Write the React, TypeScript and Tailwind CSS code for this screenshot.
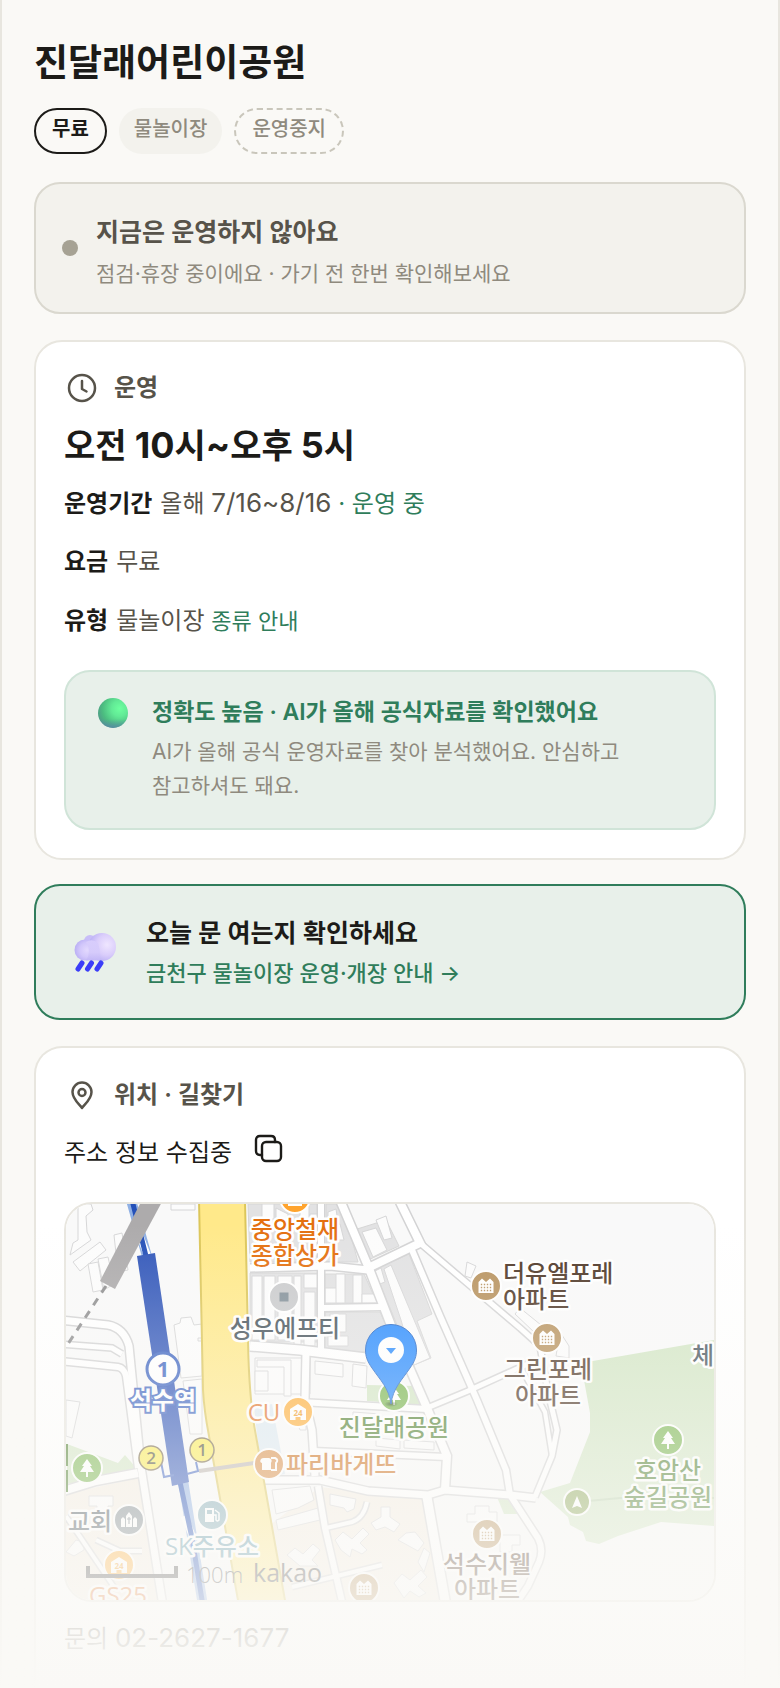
import type { ReactNode } from "react";

type Point = [number, number];

const roads: { d: string; w: number }[] = [
  { d: "M60 1320L108 1325Q124 1328 129 1346L141 1467L163 1606", w: 7 },
  { d: "M60 1344L112 1348L122 1354", w: 5 },
  { d: "M60 1361L118 1367Q124 1368 126 1376L138 1468", w: 6 },
  { d: "M60 1492L96 1481L138 1473", w: 8 },
  { d: "M66 1516L116 1590", w: 4 },
  { d: "M96 1540L120 1551L142 1551", w: 4 },
  { d: "M250 1268L330 1266L368 1270", w: 7 },
  { d: "M321 1200L321 1350", w: 6 },
  { d: "M322 1308L382 1307", w: 6 },
  { d: "M250 1346L300 1350L366 1358", w: 9 },
  { d: "M306 1352L305 1400L312 1430L315 1476", w: 7 },
  { d: "M300 1402L427 1409", w: 6 },
  { d: "M314 1451L446 1457", w: 6 },
  { d: "M264 1480L320 1480L368 1491L428 1495L445 1490L510 1495L536 1498", w: 7 },
  { d: "M340 1200L368 1266L392 1328L427 1408L447 1456L445 1490", w: 8 },
  { d: "M399 1200L420 1243L368 1268", w: 8 },
  { d: "M420 1243L467 1283L520 1328L540 1346L548 1392L557 1430L552 1456L535 1497", w: 5 },
  { d: "M520 1366L545 1412L552 1456", w: 4 },
  { d: "M412 1250L440 1316L477 1400L506 1470L510 1495L538 1538Q544 1550 539 1562L528 1586L516 1604", w: 6 },
  { d: "M427 1408L468 1391L532 1362", w: 5 },
  { d: "M318 1486L325 1528L343 1606", w: 6 },
  { d: "M427 1497L446 1606", w: 9 },
  { d: "M326 1528L352 1522Q364 1518 367 1502", w: 4 },
  { d: "M292 1587L382 1565", w: 4 },
];

const blocks: string[] = [
  "M248 1204H318V1262H250Z",
  "M326 1204H338L352 1240L358 1262H326Z",
  "M250 1273H317V1342H250Z",
  "M325 1274H364L377 1303H325Z",
  "M325 1312H380L392 1338L366 1352H325Z",
  "M354 1230L386 1220L399 1246L366 1261Z",
  "M374 1270L409 1254L432 1314L417 1321L431 1358L414 1365Z",
];

const buildings: string[] = [
  "M78 1204H91L93 1210L86 1216L87 1232L91 1240L70 1255L73 1243L78 1240Z",
  "M73 1262L100 1242L106 1250L80 1271Z",
  "M88 1264L98 1262L103 1290L93 1292Z",
  "M98 1259L108 1257L114 1284L104 1290Z",
  "M114 1235L122 1233L128 1270L118 1272Z",
  "M171 1204H195V1210H171Z",
  "M174 1325L180 1323L181 1318L191 1317L194 1325L202 1324V1338L198 1338V1341H202V1376L181 1378Z",
  "M183 1381L202 1379V1434H190Z",
  "M66 1400L80 1402L72 1438L66 1436Z",
  "M262 1204H274V1219H262Z",
  "M276 1208L288 1214V1240H276Z",
  "M300 1206H309V1240H300Z",
  "M310 1214H318V1256H310Z",
  "M328 1212L336 1209L338 1222H328Z",
  "M328 1226L340 1224L344 1240H328Z",
  "M252 1276H262V1340H252Z",
  "M264 1276H275V1340H264Z",
  "M278 1276H292V1340H278Z",
  "M294 1276H301V1346H294Z",
  "M304 1274H319V1288H304Z",
  "M304 1292H315V1346H304Z",
  "M325 1288H338V1303H325Z",
  "M336 1274H345V1303H336Z",
  "M353 1275H362V1303H353Z",
  "M362 1294H378V1303H362Z",
  "M330 1314H346V1332H330Z",
  "M328 1336H348V1346H328Z",
  "M362 1232L376 1228L387 1250L373 1257Z",
  "M376 1220L386 1216L392 1238L384 1240Z",
  "M373 1272L381 1268L385 1282L377 1285Z",
  "M384 1269L391 1265L430 1358L414 1365L401 1320Z",
  "M255 1358H310V1394H255Z",
  "M257 1360H291V1396H284V1367H257Z",
  "M255 1371H268V1391H255Z",
  "M315 1361L343 1364V1377L315 1374Z",
  "M353 1364L367 1366L366 1388L352 1386Z",
  "M353 1412L380 1414V1425L353 1422Z",
  "M376 1438L400 1440V1449L376 1446Z",
  "M404 1440L434 1442V1450L404 1448Z",
  "M296 1420H306V1430H300Z",
  "M272 1490L310 1486L314 1500L298 1508L276 1514Z",
  "M276 1520L318 1508L320 1520L278 1530Z",
  "M330 1494L356 1499L354 1509L347 1512L344 1508L330 1505Z",
  "M381 1507H390V1517L400 1524L394 1532L385 1527L376 1530L371 1523L381 1517Z",
  "M335 1540L343 1532L352 1539L363 1528L369 1534L360 1543L367 1550L362 1554L352 1549L350 1557L341 1550Z",
  "M406 1533L415 1532L424 1543L418 1551L398 1540Z",
  "M424 1548L430 1553L424 1572L418 1562Z",
  "M287 1555L295 1548L303 1554L313 1544L320 1550L312 1560L318 1566L306 1566L300 1566Z",
  "M394 1583L402 1574L410 1580L421 1570L427 1577L418 1586L426 1593L419 1597L410 1591L404 1598Z",
  "M467 1514H475V1506H489V1512H497V1522H467Z",
  "M500 1535H520V1545H512V1552H500Z",
  "M560 1332L569 1346V1358L556 1356Z",
  "M467 1262L476 1266L471 1278L465 1276Z",
  "M515 1314L520 1308L541 1325L535 1333Z",
  "M89 1496H113V1506H108V1518H97V1506H89Z",
  "M76 1540L84 1542V1550L74 1556L66 1552Z",
];

function polygon(points: Point[]) {
  return points.map((p) => p.join(",")).join(" ");
}

const forest = polygon([
  [587, 1362], [714, 1340], [714, 1526], [661, 1522], [618, 1536], [599, 1544], [586, 1541],
  [583, 1532], [570, 1525], [568, 1517], [540, 1492], [570, 1483], [590, 1432], [590, 1413], [584, 1380],
]);

function Label({ x, y, color, anchor = "middle", children }: { x: number; y: number; color: string; anchor?: "start" | "middle"; children: ReactNode }) {
  return (
    <text x={x} y={y} fill={color} textAnchor={anchor} stroke="#fff" strokeWidth={5} strokeLinejoin="round" paintOrder="stroke" fontSize={24} fontWeight={500}>
      {children}
    </text>
  );
}

function Marker({ x, y, color, r = 14, children }: { x: number; y: number; color: string; r?: number; children?: ReactNode }) {
  return (
    <g transform={`translate(${x} ${y})`}>
      <circle r={r + 1} fill={color} stroke="#fff" strokeWidth={2} />
      {children}
    </g>
  );
}

function Apartment() {
  return (
    <g>
      <path d="M-7.500 7V-4L-4-7.500L0-4L4-7.500L7.500-4V7Z" fill="#fff" />
      {[-1.5, 1.5, 4.5].map((y) => (
        <path key={y} d={`M-5.200 ${y}H6`} stroke="#b8935f" strokeWidth={1.4} strokeDasharray="1.4 1.6" />
      ))}
    </g>
  );
}

function Tree() {
  return <path d="M0-9L5-2H3L7 4H1V9H-1V4H-7L-3-2H-5Z" fill="#fff" />;
}

function Store() {
  return (
    <g>
      <path d="M0-8L8-3V8H2.500V5H-2.500V8H-8V-3Z" fill="#fff" />
      <text y={3.5} fontSize={8} fontWeight={700} textAnchor="middle" fill="#f09a1c">24</text>
    </g>
  );
}

function ParkMap() {
  return (
    <svg viewBox="66 1204 648 396" preserveAspectRatio="xMidYMid slice" className="block h-[396px] w-full font-['Open_Sans','Noto_Sans_CJK_KR',sans-serif]" role="img" aria-label="진달래어린이공원 주변 지도">
      <rect x="-400" y="1204" width="1600" height="396" fill="#f9f9f9" />
      <path d="M66 1494L138 1478L160 1600H66Z" fill="#f5eee3" />
      <path d="M320 1487L422 1499L440 1600H285L270 1525Z" fill="#f5eee3" />
      <polygon points={forest} fill="#d3e6c5" />
      <path d="M588 1501L620 1498L714 1498" fill="none" stroke="#bcd3b0" strokeWidth="2" />
      <path d="M367 1385L416 1386L421 1405L367 1401Z" fill="#d3e6c5" />
      <path d="M67 1444L118 1463L125 1455L138 1470L100 1479L67 1484Z" fill="#d3e6c5" />
      <path d="M497 1497L504 1514L518 1514L510 1497Z" fill="#d3e6c5" />
      <path d="M254 1408L272 1404L285 1474L262 1478Z" fill="#dce9f2" />

      {blocks.map((d) => <path key={d} d={d} fill="#e2e2e3" stroke="#d6d6d6" strokeWidth={1} />)}
      {buildings.map((d) => <path key={d} d={d} fill="#fcfcfc" stroke="#d6d6d7" strokeWidth={1} />)}
      {roads.map(({ d, w }) => <path key={d} d={d} fill="none" stroke="#d3d3d4" strokeWidth={w + 3} />)}
      {roads.map(({ d, w }) => <path key={d} d={d} fill="none" stroke="#fff" strokeWidth={w} />)}

      <path d="M199 1200L203 1390Q204 1410 209 1436L239 1606H286L256 1436Q249 1400 248 1340L245 1200Z" fill="#ffe98a" />
      <path d="M199 1200L203 1390Q204 1410 209 1436L239 1606M286 1606L256 1436Q249 1400 248 1340L245 1200" fill="none" stroke="#dcc65a" strokeWidth="2" />

      <path d="M199 1471L268 1461" stroke="#bdb5b0" strokeWidth="4" />
      <path d="M131 1200L148 1260M183 1480L203 1606" stroke="#8fb0e4" strokeWidth="10" fill="none" />
      <path d="M140 1236L150 1262M184 1516L194 1540" stroke="#fff" strokeWidth="7" fill="none" />
      <path d="M132 1200L147 1260M180 1482L192 1538L203 1606" stroke="#2450b8" strokeWidth="5" fill="none" />
      <path d="M137 1256L155 1253L189 1482L172 1486Z" fill="#3358ba" />
      <path d="M161 1462L164 1477L174 1475M196 1462L198 1471L187 1474" fill="none" stroke="#4468c4" strokeWidth="2" />
      <path d="M106 1286L64 1350" stroke="#8f8f90" strokeWidth="3" strokeDasharray="8 7" />
      <path d="M142 1200H163L115 1289L100 1281Z" fill="#adabac" />

      <circle cx="163" cy="1369" r="16" fill="#fff" stroke="#3f66c2" strokeWidth="3" />
      <text x="163" y="1377" fontSize="22" fontWeight="700" textAnchor="middle" fill="#3f66c2">1</text>
      <text x="163" y="1409" fontSize="24" fontWeight="700" textAnchor="middle" fill="#fff" stroke="#3f66c2" strokeWidth="4" paintOrder="stroke">석수역</text>

      {([[151, 1458, "2"], [202, 1450, "1"]] as [number, number, string][]).map(([x, y, n]) => (
        <g key={n}>
          <circle cx={x} cy={y} r="12" fill="#fbec52" stroke="#756548" strokeWidth="1.5" />
          <text x={x} y={y + 6} fontSize="17" fontWeight="600" textAnchor="middle" fill="#4c4a35">{n}</text>
        </g>
      ))}

      <Marker x={295} y={1198} color="#ffa42e"><path d="M-7 4H7V8H-7Z" fill="#fff" /></Marker>
      <Marker x={284} y={1297} color="#cacbcd"><rect x="-4.5" y="-4.5" width="9" height="9" fill="#84919a" /></Marker>
      <Marker x={298} y={1412} color="#ffae37"><Store /></Marker>
      <Marker x={269} y={1464} color="#d98d45">
        <path d="M-8-5Q-10-2-7-1V6H2V-1Q4-5 0-6H-5Q-7-6-8-5Z" fill="#fff" />
        <path d="M2-6H6Q10-4 7-1V6H2" fill="none" stroke="#fff" strokeWidth="2" />
      </Marker>
      <Marker x={486} y={1286} color="#b8935f"><Apartment /></Marker>
      <Marker x={547} y={1338} color="#b8935f"><Apartment /></Marker>
      <Marker x={487} y={1534} color="#b8935f"><Apartment /></Marker>
      <Marker x={364} y={1588} color="#b8935f"><Apartment /></Marker>
      <Marker x={394} y={1396} color="#7ab650"><Tree /></Marker>
      <Marker x={668} y={1440} color="#7ab650"><Tree /></Marker>
      <Marker x={87} y={1468} color="#7ab650"><Tree /></Marker>
      <Marker x={577} y={1502} r={12} color="#8ea95c"><path d="M0-6L5 6L0 4L-5 6Z" fill="#fff" /></Marker>
      <Marker x={212} y={1515} color="#82aab6">
        <path d="M-7-7H2V7H-7ZM-5-5V-1H0V-5Z" fill="#fff" fillRule="evenodd" />
        <path d="M3-5L7-2V5Q5 7 4 5V0H2" fill="none" stroke="#fff" strokeWidth="1.5" />
      </Marker>
      <Marker x={129} y={1520} color="#7c878d">
        <path d="M-8 7V-1L-6-3L-4-1V7ZM-3 7V-4L0-8L3-4V7ZM4 7V-1L6-3L8-1V7Z" fill="#fff" />
        <path d="M0-3V4M-2-1H2" stroke="#7c878d" strokeWidth="1.2" />
      </Marker>
      <Marker x={119} y={1565} color="#ffae37"><Store /></Marker>

      <Label x={295} y={1238} color="#e4700f">중앙철재</Label>
      <Label x={295} y={1264} color="#e4700f">종합상가</Label>
      <Label x={285} y={1337} color="#47545c">성우에프티</Label>
      <Label x={264} y={1421} color="#e27227">CU</Label>
      <Label x={394} y={1436} color="#4e7f2f">진달래공원</Label>
      <Label x={286} y={1473} anchor="start" color="#cc6c17">파리바게뜨</Label>
      <Label x={503} y={1282} anchor="start" color="#503929">더유엘포레</Label>
      <Label x={503} y={1308} anchor="start" color="#503929">아파트</Label>
      <Label x={548} y={1378} color="#503929">그린포레</Label>
      <Label x={548} y={1404} color="#503929">아파트</Label>
      <Label x={692} y={1364} anchor="start" color="#47545c">체</Label>
      <Label x={668} y={1479} color="#4e7f2f">호암산</Label>
      <Label x={668} y={1506} color="#4e7f2f">숲길공원</Label>
      <Label x={68} y={1530} anchor="start" color="#47545c">교회</Label>
      <Label x={212} y={1555} color="#5f97a8">SK주유소</Label>
      <Label x={118} y={1604} color="#e27227">GS25</Label>
      <Label x={487} y={1573} color="#503929">석수지웰</Label>
      <Label x={487} y={1598} color="#503929">아파트</Label>
      <path d="M67 1444V1466M67 1470V1492" stroke="#4e7f2f" strokeWidth="2" />

      <path d="M88 1566V1576H176V1566" fill="none" stroke="#444" strokeWidth="4" />
      <text x="186" y="1583" fontSize="22" fill="#4c4c4c" fontWeight="300">100m</text>
      <text x="253" y="1582" fontSize="25" fill="#444" fontWeight="500">kakao</text>

      <defs>
        <radialGradient id="pin-shadow"><stop offset="0" stopColor="#1c3a18" stopOpacity=".7" /><stop offset="1" stopColor="#1c3a18" stopOpacity="0" /></radialGradient>
      </defs>
      <ellipse cx="391" cy="1404" rx="7" ry="3" fill="url(#pin-shadow)" />
      <path d="M391 1404C389 1388 380 1380 372 1368C367 1361 365.500 1356 365.500 1350A25.500 25.500 0 0 1 416.500 1350C416.500 1356 415 1361 410 1368C402 1380 393 1388 391 1404Z" fill="#2a8cff" stroke="#2468c8" strokeWidth="1" />
      <circle cx="391" cy="1350" r="13" fill="#fff" />
      <path d="M386 1348H396L391 1354Z" fill="#2a8cff" />
    </svg>
  );
}

function RainCloud() {
  return (
    <svg viewBox="0 0 48 44" className="mb-1 h-11 w-12 shrink-0" aria-hidden="true">
      <defs>
        <radialGradient id="cloud-right" cx=".68" cy=".42" r=".62"><stop offset="0" stopColor="#efe6ff" /><stop offset=".6" stopColor="#dacdfb" /><stop offset="1" stopColor="#bdb3f5" /></radialGradient>
        <radialGradient id="cloud-left" cx=".6" cy=".5" r=".58"><stop offset="0" stopColor="#e3d9fe" /><stop offset=".6" stopColor="#d2c7fb" /><stop offset="1" stopColor="#bcb1f5" /></radialGradient>
        <linearGradient id="cloud-body" x1="0" y1="0" x2="0" y2="1"><stop offset="0" stopColor="#d8cdfc" /><stop offset=".6" stopColor="#d6cbfb" /><stop offset="1" stopColor="#c2b7f6" /></linearGradient>
      </defs>
      <circle cx="20" cy="12" r="6" fill="#c8bdf8" />
      <circle cx="32" cy="18" r="14" fill="url(#cloud-right)" />
      <circle cx="15" cy="21" r="10.500" fill="url(#cloud-left)" />
      <path d="M16 13Q22 9 28 14Q31 24 30 31.500H16Q22 22 16 13Z" fill="url(#cloud-body)" />
      <path d="M12 34L8 40M21.500 34L17.500 40M31 34L27 40" stroke="#3b3df8" strokeWidth="5" strokeLinecap="round" />
    </svg>
  );
}

function StatusBall() {
  return (
    <svg viewBox="0 0 30 30" className="mt-1 size-[30px] shrink-0" aria-hidden="true">
      <defs>
        <radialGradient id="ball" cx=".72" cy=".35" r=".75"><stop offset="0" stopColor="#6dff9f" /><stop offset=".35" stopColor="#62ea96" /><stop offset=".75" stopColor="#4cbd80" /><stop offset="1" stopColor="#4e9f86" /></radialGradient>
        <linearGradient id="ball-base" x1="0" y1="0" x2="0" y2="1"><stop offset=".7" stopColor="#5a7fb0" stopOpacity="0" /><stop offset="1" stopColor="#5a7fb0" stopOpacity=".7" /></linearGradient>
      </defs>
      <circle cx="15" cy="15" r="15" fill="url(#ball)" />
      <circle cx="15" cy="15" r="15" fill="url(#ball-base)" />
    </svg>
  );
}

function SectionTitle({ icon, children }: { icon: ReactNode; children: ReactNode }) {
  return (
    <h2 className="flex items-center gap-[14px] text-[24px] leading-9 font-semibold text-[#57534a]">
      <svg viewBox="0 0 36 36" className="size-9 shrink-0" fill="none" stroke="currentColor" strokeWidth="2.5" strokeLinecap="round" strokeLinejoin="round" aria-hidden="true">
        {icon}
      </svg>
      {children}
    </h2>
  );
}

function InfoRow({ label, children }: { label: string; children: ReactNode }) {
  return (
    <div className="flex h-10 items-baseline gap-2 leading-10">
      <dt className="font-bold text-[#1c1b18]">{label}</dt>
      <dd>{children}</dd>
    </div>
  );
}

export default function App() {
  return (
    <main className="relative flex min-h-screen flex-col border-x-2 border-[#e8e6df] bg-[#faf9f6] px-8 pt-[37px] font-['Inter','Noto_Sans_CJK_KR',sans-serif] text-[24px] text-[#1c1b18]">
      <h1 className="text-[37px] leading-[52px] font-bold">진달래어린이공원</h1>

      <div className="mt-[19px] flex gap-3 text-[20px] leading-[38px]">
        <span className="h-[46px] rounded-full border-2 border-[#1c1b18] px-4 font-semibold">무료</span>
        <span className="h-[46px] rounded-full bg-[#f3f2ed] px-[15px] pt-0.5 font-medium text-[#8f8a7e]">물놀이장</span>
        <span className="h-[46px] rounded-full border-2 border-dashed border-[#c9c6bb] px-4 font-medium text-[#8f8a7e]">운영중지</span>
      </div>

      <section className="mt-7 flex items-center gap-[18px] rounded-[26px] border-2 border-[#dad8cf] bg-[#f3f2ed] px-[26px] py-[18px]">
        <span className="size-4 shrink-0 rounded-full bg-[#a6a294]" />
        <div className="pt-[10px]">
          <p className="text-[25px] leading-10 font-semibold text-[#57534a]">지금은 운영하지 않아요</p>
          <p className="mt-0.5 text-[21px] leading-10 text-[#8f8a7e]">점검·휴장 중이에요 · 가기 전 한번 확인해보세요</p>
        </div>
      </section>

      <section className="mt-[26px] rounded-[28px] border-2 border-[#e8e6df] bg-white px-7 py-7">
        <SectionTitle icon={<><circle cx="18" cy="18" r="13" /><path d="M18 11V19L22.500 21.500" /></>}>운영</SectionTitle>
        <p className="mt-[15px] h-12 text-[34px] leading-[48px] font-bold">오전 <span className="text-[36px]">10</span>시<span className="text-[36px]">~</span>오후 <span className="text-[36px]">5</span>시</p>
        <dl className="mt-[14px] flex flex-col gap-[19px] text-[#57534a]">
          <InfoRow label="운영기간">올해 <span className="text-[26px]">7/16~8/16</span> <span className="text-[#2f7d5b]">· 운영 중</span></InfoRow>
          <InfoRow label="요금">무료</InfoRow>
          <InfoRow label="유형">물놀이장 <a href="#types" className="text-[22px] text-[#2f7d5b]">종류 안내</a></InfoRow>
        </dl>
        <div className="mt-[29px] flex gap-6 rounded-[26px] border-2 border-[#d0e4d8] bg-[#e8f0ea] px-8 pt-[22px] pb-[25px]">
          <StatusBall />
          <div>
            <p className="text-[23px] leading-9 font-semibold text-[#2f7d5b]">정확도 높음 · AI가 올해 공식자료를 확인했어요</p>
            <p className="mt-[5px] text-[21px] leading-[34px] break-keep text-[#8f8a7e]">AI가 올해 공식 운영자료를 찾아 분석했어요. 안심하고 참고하셔도 돼요.</p>
          </div>
        </div>
      </section>

      <a href="#notice" className="mt-6 flex items-center gap-7 rounded-[26px] border-2 border-[#2f7d5b] bg-[#e8f0ea] px-[34px] pt-[27px] pb-[25px]">
        <RainCloud />
        <span className="flex flex-col">
          <span className="text-[25px] leading-10 font-semibold">오늘 문 여는지 확인하세요</span>
          <span className="text-[22px] leading-10 font-medium text-[#2f7d5b]">금천구 물놀이장 운영·개장 안내 →</span>
        </span>
      </a>

      <section className="mt-[26px] flex-1 rounded-t-[28px] border-2 border-b-0 border-[#e8e6df] bg-white px-7 pt-[29px]">
        <SectionTitle icon={<><path d="M18 31C15 27 8.500 22 8.500 15A9.500 9.500 0 0 1 27.500 15C27.500 22 21 27 18 31Z" /><circle cx="18" cy="15.500" r="3.500" /></>}>위치 · 길찾기</SectionTitle>
        <div className="mt-4 flex h-12 items-center gap-[22px]">
          <p>주소 정보 수집중</p>
          <button type="button" aria-label="주소 복사" className="mb-2">
            <svg viewBox="0 0 30 30" className="size-[30px]" fill="none" stroke="currentColor" strokeWidth="2.4" strokeLinecap="round" strokeLinejoin="round" aria-hidden="true">
              <rect x="8" y="8" width="19" height="19" rx="4" />
              <path d="M8 21H6Q2 21 2 17V6Q2 2 6 2H17Q21 2 21 6V8" />
            </svg>
          </button>
        </div>
        <div className="mt-[25px] overflow-hidden rounded-[28px] border-2 border-[#e8e6df]">
          <ParkMap />
        </div>
        <p className="mt-4 h-10 leading-10 text-[#57534a]">문의 <a href="tel:02-2627-1677" className="text-[26px]">02-2627-1677</a></p>
      </section>

      <div className="pointer-events-none absolute inset-x-0 bottom-0 -mx-0.5 h-[464px] bg-linear-to-b from-[#faf9f6]/0 to-[#faf9f6]" />
    </main>
  );
}
